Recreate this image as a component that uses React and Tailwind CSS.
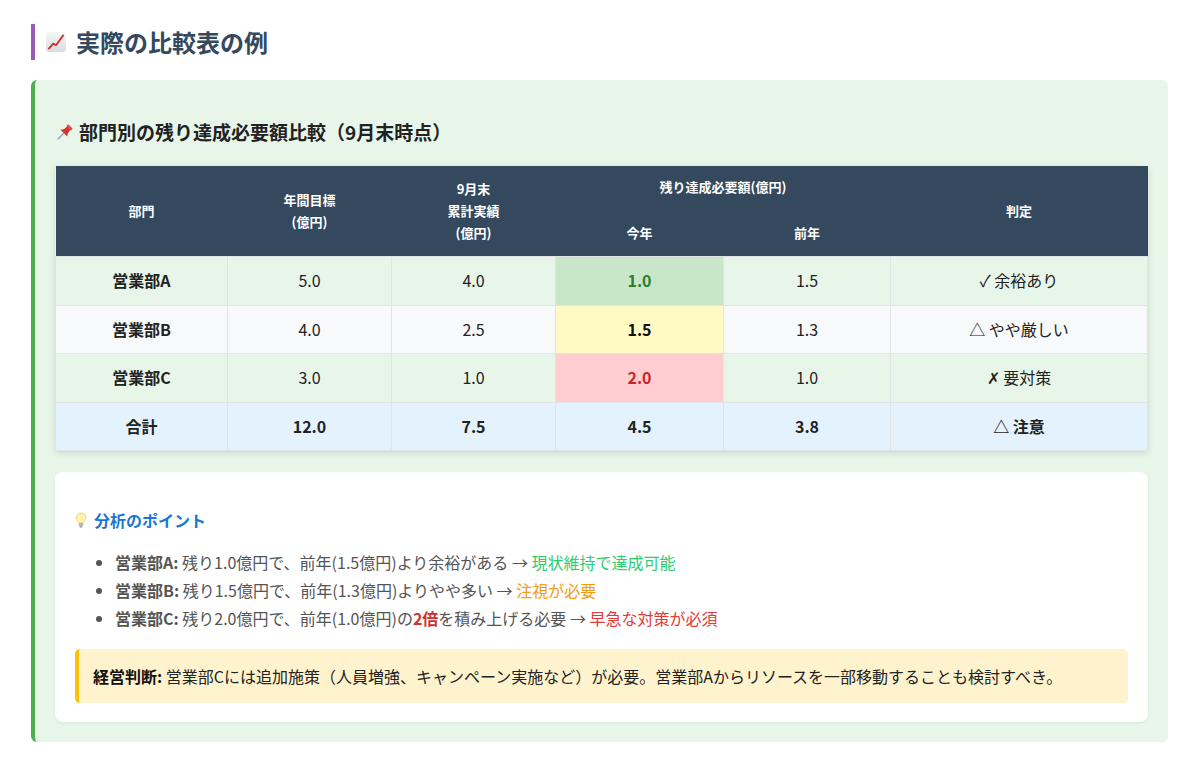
import React from "react";

const rows = [
  {
    name: "営業部A",
    target: "5.0",
    actual: "4.0",
    now: "1.0",
    prev: "1.5",
    judge: "✓ 余裕あり",
    rowCls: "bg-[#e8f5e9]",
    nowCls: "bg-[#c8e6c9] text-[#2e7d32]",
  },
  {
    name: "営業部B",
    target: "4.0",
    actual: "2.5",
    now: "1.5",
    prev: "1.3",
    judge: "△ やや厳しい",
    rowCls: "bg-[#f8f9fa]",
    nowCls: "bg-[#fff9c4] text-[#111]",
  },
  {
    name: "営業部C",
    target: "3.0",
    actual: "1.0",
    now: "2.0",
    prev: "1.0",
    judge: "✗ 要対策",
    rowCls: "bg-[#e8f5e9]",
    nowCls: "bg-[#ffcdd2] text-[#c62828]",
  },
];

const ChartIcon = () => (
  <svg width="22" height="22" viewBox="0 0 20 20" className="shrink-0">
    <defs>
      <linearGradient id="cg" x1="0" y1="0" x2="0" y2="1">
        <stop offset="0" stopColor="#f5f6f7" />
        <stop offset="1" stopColor="#d9dde0" />
      </linearGradient>
    </defs>
    <rect x="1" y="1" width="18" height="18" rx="2.5" fill="url(#cg)" />
    <polyline
      points="3.5,16 7.5,11.5 10,13 16.5,4"
      fill="none"
      stroke="#d32f2f"
      strokeWidth="1.7"
      strokeLinejoin="round"
      strokeLinecap="round"
    />
  </svg>
);

const PinIcon = () => (
  <svg width="19" height="19" viewBox="0 0 20 20" className="shrink-0">
    <g transform="rotate(45 10 10)">
      <line x1="10" y1="11" x2="10" y2="20" stroke="#8a9aa4" strokeWidth="1.3" />
      <path d="M5 11 L15 11 L13 8 L12.5 3.5 L7.5 3.5 L7 8 Z" fill="#d93030" />
      <rect x="6.5" y="1" width="7" height="3" rx="1.2" fill="#e84545" />
    </g>
  </svg>
);

const BulbIcon = () => (
  <svg width="12" height="17" viewBox="0 0 12 17" className="shrink-0">
    <path
      d="M6 1 C3 1 1.2 3.2 1.2 5.8 C1.2 8 2.8 9.2 3.6 10.8 L8.4 10.8 C9.2 9.2 10.8 8 10.8 5.8 C10.8 3.2 9 1 6 1 Z"
      fill="#fff3b0"
      stroke="#e6c84a"
      strokeWidth="0.6"
    />
    <rect x="3.8" y="11" width="4.4" height="3.2" rx="0.6" fill="#b0b6bb" />
    <rect x="4.6" y="14.2" width="2.8" height="1.4" rx="0.6" fill="#8d9399" />
  </svg>
);

const cell = "border border-[#e1e4e6] py-3 text-center align-middle";

export default function App() {
  return (
    <div className="min-h-[773px] bg-white pl-[31px] pr-[32px] pt-[24px] pb-[30px] font-['Noto_Sans_CJK_JP','Noto_Sans',sans-serif] text-[#333]">
      <h2 className="flex h-[36px] items-center gap-[9px] border-l-[4px] border-[#9b59b6] pl-[10px] text-[24px] font-bold text-[#34495e]">
        <ChartIcon />
        <span>実際の比較表の例</span>
      </h2>

      <div className="mt-[20px] rounded-[6px] border-l-[4px] border-[#4caf50] bg-[#e8f5e9] px-[20px] pt-[38px] pb-[20px]">
        <h4 className="flex h-[28px] items-center gap-[5px] text-[19px] font-bold text-[#222]">
          <PinIcon />
          <span>部門別の残り達成必要額比較（9月末時点）</span>
        </h4>

        <table className="mt-[20px] w-full table-fixed border-collapse text-[16px] text-[#222] shadow-[0_2px_6px_rgba(0,0,0,0.12)]">
          <colgroup>
            <col className="w-[172px]" />
            <col className="w-[164px]" />
            <col className="w-[164px]" />
            <col className="w-[168px]" />
            <col className="w-[167px]" />
            <col />
          </colgroup>
          <thead className="bg-[#34495e] text-[13px] font-bold leading-[22px] text-white">
            <tr>
              <th rowSpan={2} className="py-3 text-center font-bold">
                部門
              </th>
              <th rowSpan={2} className="py-3 text-center font-bold">
                年間目標
                <br />
                (億円)
              </th>
              <th rowSpan={2} className="py-3 text-center font-bold">
                9月末
                <br />
                累計実績
                <br />
                (億円)
              </th>
              <th colSpan={2} className="pt-[10px] pb-[12px] text-center font-bold">
                残り達成必要額(億円)
              </th>
              <th rowSpan={2} className="py-3 text-center font-bold">
                判定
              </th>
            </tr>
            <tr>
              <th className="pt-[12px] pb-[12px] text-center font-bold">今年</th>
              <th className="pt-[12px] pb-[12px] text-center font-bold">前年</th>
            </tr>
          </thead>
          <tbody className="leading-[23.5px]">
            {rows.map((r) => (
              <tr key={r.name} className={r.rowCls}>
                <td className={`${cell} font-bold`}>{r.name}</td>
                <td className={cell}>{r.target}</td>
                <td className={cell}>{r.actual}</td>
                <td className={`${cell} font-bold ${r.nowCls}`}>{r.now}</td>
                <td className={cell}>{r.prev}</td>
                <td className={cell}>{r.judge}</td>
              </tr>
            ))}
            <tr className="bg-[#e3f2fd] font-bold">
              <td className={cell}>合計</td>
              <td className={cell}>12.0</td>
              <td className={cell}>7.5</td>
              <td className={cell}>4.5</td>
              <td className={cell}>3.8</td>
              <td className={cell}>△ 注意</td>
            </tr>
          </tbody>
        </table>

        <div className="mt-[21px] rounded-[8px] bg-white px-[20px] pt-[36px] pb-[19px] shadow-[0_1px_3px_rgba(0,0,0,0.06)]">
          <h5 className="flex h-[24px] items-center gap-[7px] text-[16px] font-bold text-[#1976d2]">
            <BulbIcon />
            <span>分析のポイント</span>
          </h5>
          <ul className="mt-[16px] list-disc pl-[40px] text-[16px] leading-[28px] text-[#555] marker:text-[#555]">
            <li>
              <strong className="text-[#555]">営業部A:</strong> 残り1.0億円で、前年(1.5億円)より余裕がある →{" "}
              <span className="text-[#2ecc71]">現状維持で達成可能</span>
            </li>
            <li>
              <strong className="text-[#555]">営業部B:</strong> 残り1.5億円で、前年(1.3億円)よりやや多い →{" "}
              <span className="text-[#f39c12]">注視が必要</span>
            </li>
            <li>
              <strong className="text-[#555]">営業部C:</strong> 残り2.0億円で、前年(1.0億円)の
              <strong className="text-[#d32f2f]">2倍</strong>を積み上げる必要 →{" "}
              <span className="text-[#e53935]">早急な対策が必須</span>
            </li>
          </ul>

          <div className="mt-[17px] flex h-[54px] items-center rounded-[5px] border-l-[4px] border-[#ffc107] bg-[#fff3cd] pl-[14px] text-[16px] text-[#222]">
            <p>
              <strong className="text-[#111]">経営判断:</strong> 営業部Cには追加施策（人員増強、キャンペーン実施など）が必要。営業部Aからリソースを一部移動することも検討すべき。
            </p>
          </div>
        </div>
      </div>
    </div>
  );
}
